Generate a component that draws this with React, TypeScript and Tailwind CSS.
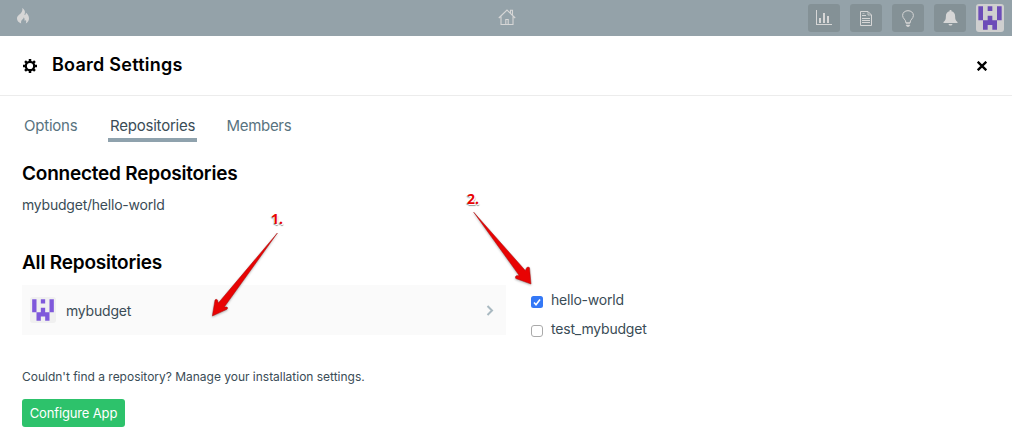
import type { ReactNode } from 'react';

function Identicon({ className, bg, fg }: { className: string; bg: string; fg: string }) {
  return (
    <svg viewBox="0 0 6 6" className={className}>
      <rect width="6" height="6" fill={bg} />
      <path
        fill={fg}
        d="M.5.5h1v3h-1ZM4.500.5h1v3h-1ZM2.500.5h1v1h-1ZM2.500 2.500h1v1h1v2h-1v-1h-1v1h-1v-2h1Z"
      />
    </svg>
  );
}

function NavButton({ label, children }: { label: string; children: ReactNode }) {
  return (
    <button aria-label={label} className="flex h-7 w-8 items-center justify-center rounded-[3px] bg-[#849196] text-[#d6d6d6]">
      {children}
    </button>
  );
}

function TopBar() {
  return (
    <header className="flex h-9 items-start justify-between bg-[#94a2a9] text-[#d6d6d6]">
      <div className="w-[204px] pt-2 pl-[17px]">
        <svg width="12" height="16" viewBox="0 0 12 16" fill="currentColor">
          <path d="M5.200 0C7.200 1 8.300 3 7.900 5c-.1.700-.4 1.300-.4 2 .8-.2 1.200-.8 1.300-1.600.1-.4.1-.6 0-1C10.900 6 12 8.200 12 10.400c0 2-1 3.800-3.200 5.100.5-1.300.5-2.500.2-3.600-.3.500-.8.800-1.500.9.200-1.500 0-2.500-.7-3.500-.2 1.200-.9 1.700-1.700 2.500-1 1-1.300 2.300-.9 3.800C1.400 14.500 0 12.800 0 10.600 0 7.700 2.400 6.800 4 5c1.300-1.500 1.700-3.200 1.200-5Z" />
        </svg>
      </div>
      <svg className="mt-[9px] ml-[1px]" width="18" height="17" viewBox="0 0 18 17" fill="none" stroke="currentColor" strokeWidth="1.1">
        <path d="M.8 9 9 1l8.200 8M3 7.500V15.500h12V7.500M12.500 4V1.300h2V6M7.800 15.500v-5h2.400v5" />
      </svg>
      <div className="flex gap-[10px] pt-1 pr-2">
        <NavButton label="Charts">
          <svg width="16" height="16" viewBox="0 0 16 16" fill="currentColor">
            <path d="M0 0h1v14h15v1H0ZM3 8h2v5H3ZM7 3h2v10H7ZM11 6h2v7h-2Z" />
          </svg>
        </NavButton>
        <NavButton label="Notes">
          <svg width="12" height="15" viewBox="0 0 12 15" fill="none" stroke="currentColor">
            <path d="M.5.500h7.500l3.500 3.500v10.500H.5ZM2 4.500h4M2 7.500h8M2 9.500h8M2 11.500h8" />
            <path d="M2.500 2.500h2" strokeWidth=".6" />
            <path d="M8 .8v3.200h3.200" strokeWidth=".8" />
          </svg>
        </NavButton>
        <NavButton label="Ideas">
          <svg width="12" height="17" viewBox="0 0 12 17" fill="none" stroke="currentColor">
            <path d="M4 13c0-3.600-3.400-4.300-3.400-7.500C.600 2.500 3 .7 6 .7s5.400 1.800 5.400 4.800C11.400 8.700 8 9.400 8 13ZM3.800 13h4.400" />
            <path d="M4 15h4l-1 1.500H5Z" fill="currentColor" strokeWidth=".5" />
          </svg>
        </NavButton>
        <NavButton label="Notifications">
          <svg width="15" height="16" viewBox="0 0 15 16" fill="currentColor">
            <path d="M6.600 0h1.800v1.300c2.400.5 3.700 2.300 3.700 4.800 0 3.300.6 4.600 2.400 6V13H.500v-.9c1.800-1.400 2.400-2.700 2.400-6 0-2.500 1.300-4.300 3.700-4.800ZM5.500 14h4c-.3 1-1 1.500-2 1.500s-1.700-.5-2-1.500Z" />
          </svg>
        </NavButton>
        <Identicon className="h-7 w-7 rounded-[3px]" bg="#cfcfcf" fg="#6c4cb8" />
      </div>
    </header>
  );
}

function Arrow({ className, viewBox, d }: { className: string; viewBox: string; d: string }) {
  return (
    <svg className={className} viewBox={viewBox} fill="#e80303" stroke="#a81010" strokeWidth=".5" strokeLinejoin="round">
      <path d={d} />
    </svg>
  );
}

const NOTE = "absolute font-['Open_Sans',sans-serif] text-[14px] leading-4 font-bold text-[#e80303] [text-shadow:-1px_-1px_0_#fff,1px_1px_0_#fff,-1px_1px_1px_#999,1px_2px_1px_#999]";

export default function App() {
  return (
    <div className="relative h-[446px] w-[1012px] overflow-hidden bg-white font-['Inter',sans-serif] text-[#3a4c56]">
      <TopBar />
      <div className="flex h-[60px] items-center border-b border-[#ececec] pr-6 pl-[23px] text-black">
        <svg width="14" height="14" viewBox="0 0 14 14" fill="none" stroke="currentColor">
          <circle cx="7" cy="7" r="4.200" strokeWidth="2.200" />
          <path d="M7 0v2.500M7 11.500V14M0 7h2.500M11.500 7H14M2.050 2.050l1.800 1.800M10.150 10.150l1.800 1.800M2.050 11.950l1.800-1.800M10.150 3.850l1.800-1.800" strokeWidth="2.500" />
        </svg>
        <h1 className="-mt-[2px] ml-[15px] text-[18px] leading-6 font-semibold tracking-[0.25px]">Board Settings</h1>
        <svg className="mt-[1px] ml-auto mr-[1px]" width="10" height="10" viewBox="0 0 10 10" stroke="currentColor" strokeWidth="2.300">
          <path d="m.7.7 8.600 8.600M9.300.7.7 9.300" />
        </svg>
      </div>
      <main className="px-[22px] pt-5">
        <nav className="flex h-[26px] text-[15px] leading-5 tracking-[-0.22px] text-[#587380]">
          <span className="w-[86px] pl-[2px]">Options</span>
          <span className="w-[89px] border-b-4 border-[#8fa2ad] pl-[2px] whitespace-nowrap text-[#3a4c56]">Repositories</span>
          <span className="ml-[29.5px] tracking-[-0.3px]">Members</span>
        </nav>
        <h2 className="mt-5 text-[19px] leading-6 font-semibold tracking-[-0.22px] text-black">Connected Repositories</h2>
        <p className="mt-[9px] text-[14px] leading-5 tracking-[-0.22px]">mybudget/hello-world</p>
        <h2 className="mt-[36px] text-[19px] leading-6 font-semibold tracking-[-0.2px] text-black">All Repositories</h2>
        <div className="mt-[10px] flex">
          <div className="flex h-[50px] w-[484px] items-center bg-[#fafafa] pr-[12px] pl-2 text-[14px]">
            <Identicon className="h-[26px] w-[26px] rounded-[3px]" bg="#f0f0f0" fg="#7f59db" />
            <span className="mt-[2px] ml-[10px] leading-5 tracking-[-0.2px]">mybudget</span>
            <svg className="ml-auto" width="8" height="11" viewBox="0 0 8 11" fill="none" stroke="#a9b9c1" strokeWidth="2">
              <path d="m1.500 1 4.500 4.500L1.500 10" />
            </svg>
          </div>
          <div className="ml-[25px] flex flex-col gap-[9px] pt-[5px] text-[14px] leading-5 tracking-[-0.2px]">
            <label className="flex">
              <svg className="mt-[6px] mr-2" width="12" height="12" viewBox="0 0 12 12">
                <rect width="12" height="12" rx="2.500" fill="#3478f6" />
                <path d="m3 6.500 2 2.200L9 3.500" fill="none" stroke="#fff" strokeWidth="1.600" />
              </svg>
              hello-world
            </label>
            <label className="flex">
              <svg className="mt-[6px] mr-2" width="12" height="12" viewBox="0 0 12 12">
                <rect x=".5" y=".5" width="11" height="11" rx="2.500" fill="#fff" stroke="#aaa" />
              </svg>
              test_mybudget
            </label>
          </div>
        </div>
        <p className="mt-[30px] text-[12px] leading-4 tracking-[-0.015px]">Couldn't find a repository? Manage your installation settings.</p>
        <button className="mt-[14px] h-7 w-[103px] rounded-[3px] bg-[#2dc26b] text-[13px] leading-7 tracking-[-0.15px] whitespace-nowrap text-white">Configure App</button>
      </main>
      <span className={`${NOTE} top-[211px] left-[271px]`}>1.</span>
      <span className={`${NOTE} top-[191px] left-[467px]`}>2.</span>
      <Arrow
        className="absolute top-[230px] left-[210px] h-[90px] w-[72px] drop-shadow-[0_1px_1px_rgba(0,0,0,0.3)]"
        viewBox="0 0 72 90"
        d="M67.400 3 14.300 77 17 77Q18.300 78 17 79.300L2.300 86 5 70Q6 68.500 7.500 70L8.300 73Z"
      />
      <Arrow
        className="absolute top-[210px] left-[472px] h-[76px] w-[62px] drop-shadow-[0_1px_1px_rgba(0,0,0,0.3)]"
        viewBox="0 0 62 76"
        d="M1.700 2.200 53.300 60.500 54.700 57.700Q56 56.300 57.500 57.700L59 74 43.800 68.500Q42.800 66.800 44.200 65.800L47.200 65.500Z"
      />
    </div>
  );
}
